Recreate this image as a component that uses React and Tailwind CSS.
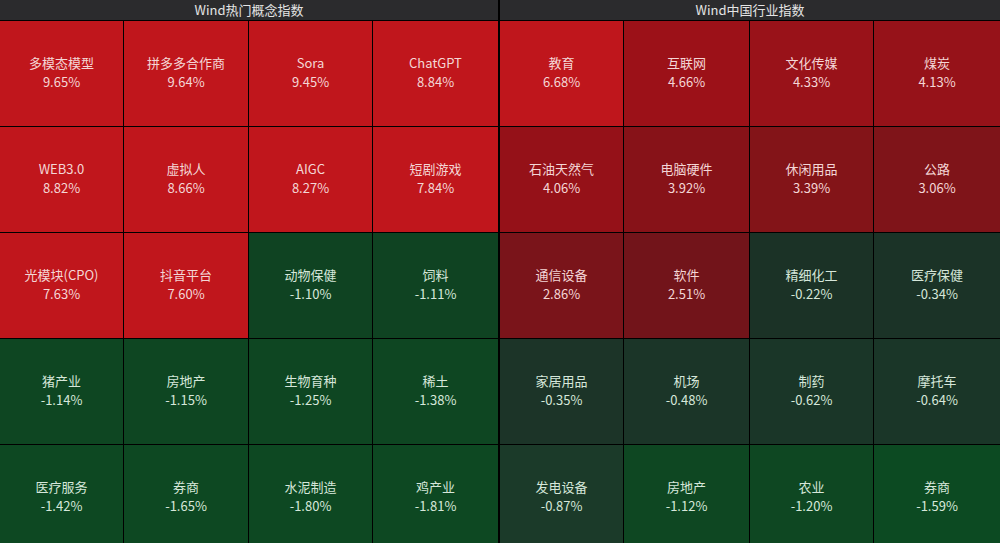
import React from "react";

const left = [
  ["多模态模型", "9.65%", "bg-[#c0161c]"],
  ["拼多多合作商", "9.64%", "bg-[#c0161c]"],
  ["Sora", "9.45%", "bg-[#c0161c]"],
  ["ChatGPT", "8.84%", "bg-[#c0161c]"],
  ["WEB3.0", "8.82%", "bg-[#c0161c]"],
  ["虚拟人", "8.66%", "bg-[#c0161c]"],
  ["AIGC", "8.27%", "bg-[#c0161c]"],
  ["短剧游戏", "7.84%", "bg-[#c0161c]"],
  ["光模块(CPO)", "7.63%", "bg-[#c0161c]"],
  ["抖音平台", "7.60%", "bg-[#c0161c]"],
  ["动物保健", "-1.10%", "bg-[#0f4322]"],
  ["饲料", "-1.11%", "bg-[#0f4322]"],
  ["猪产业", "-1.14%", "bg-[#0e4622]"],
  ["房地产", "-1.15%", "bg-[#0e4622]"],
  ["生物育种", "-1.25%", "bg-[#0e4622]"],
  ["稀土", "-1.38%", "bg-[#0e4622]"],
  ["医疗服务", "-1.42%", "bg-[#0d4822]"],
  ["券商", "-1.65%", "bg-[#0d4822]"],
  ["水泥制造", "-1.80%", "bg-[#0d4822]"],
  ["鸡产业", "-1.81%", "bg-[#0d4822]"],
];

const right = [
  ["教育", "6.68%", "bg-[#bf161c]"],
  ["互联网", "4.66%", "bg-[#9c1118]"],
  ["文化传媒", "4.33%", "bg-[#991219]"],
  ["煤炭", "4.13%", "bg-[#961219]"],
  ["石油天然气", "4.06%", "bg-[#951118]"],
  ["电脑硬件", "3.92%", "bg-[#871218]"],
  ["休闲用品", "3.39%", "bg-[#831418]"],
  ["公路", "3.06%", "bg-[#7f1419]"],
  ["通信设备", "2.86%", "bg-[#7a141a]"],
  ["软件", "2.51%", "bg-[#72141a]"],
  ["精细化工", "-0.22%", "bg-[#1b3226]"],
  ["医疗保健", "-0.34%", "bg-[#1b3327]"],
  ["家居用品", "-0.35%", "bg-[#1c3428]"],
  ["机场", "-0.48%", "bg-[#1b3528]"],
  ["制药", "-0.62%", "bg-[#1a3628]"],
  ["摩托车", "-0.64%", "bg-[#1a3628]"],
  ["发电设备", "-0.87%", "bg-[#1b3a29]"],
  ["房地产", "-1.12%", "bg-[#0e4722]"],
  ["农业", "-1.20%", "bg-[#0e4722]"],
  ["券商", "-1.59%", "bg-[#0c4a22]"],
];

function Panel({ title, items, className, cols }) {
  return (
    <div className={"flex flex-col h-full gap-px " + className}>
      <div className="h-[20px] bg-[#2b2b2d] flex items-center justify-center text-[13px] text-[#e4e4e4] shrink-0">
        {title}
      </div>
      <div className={"grid grid-rows-[repeat(5,105px)] gap-px " + cols}>
        {items.map(([name, pct, bg], i) => {
          const neg = pct.startsWith("-");
          return (
            <div
              key={i}
              className={
                "flex flex-col items-center justify-center pb-[4px] text-[13px] leading-[19px] " +
                bg +
                (neg ? " text-[#d6e7da]" : " text-[#f4d6d6]")
              }
            >
              <div>{name}</div>
              <div>{pct}</div>
            </div>
          );
        })}
      </div>
    </div>
  );
}

export default function App() {
  return (
    <div
      className="w-[1000px] h-[543px] bg-black flex gap-[2px] overflow-hidden"
      style={{ fontFamily: '"Noto Sans CJK SC", "Noto Sans", sans-serif' }}
    >
      <Panel
        title="Wind热门概念指数"
        items={left}
        className="w-[498px]"
        cols="grid-cols-[123px_124px_123px_125px]"
      />
      <Panel
        title="Wind中国行业指数"
        items={right}
        className="w-[500px]"
        cols="grid-cols-[123px_125px_123px_126px]"
      />
    </div>
  );
}
